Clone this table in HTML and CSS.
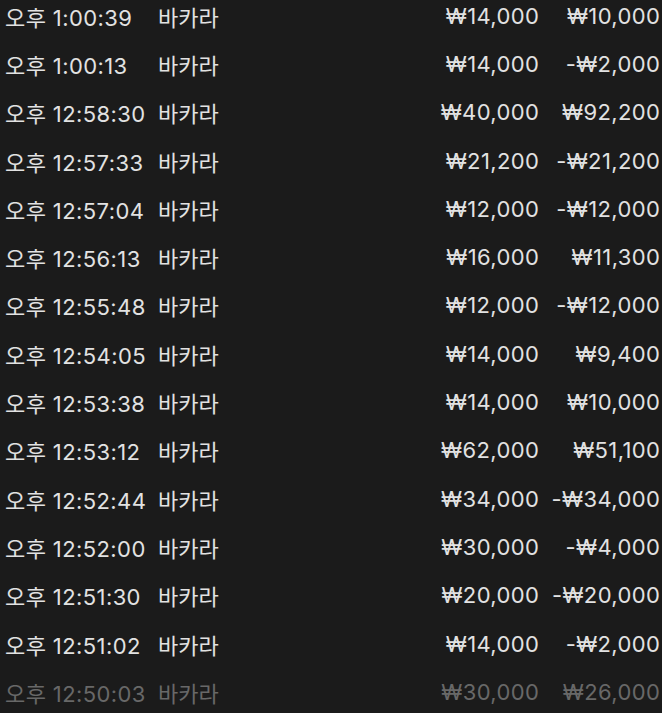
FILE: index.html
```html
<!DOCTYPE html>
<html lang="ko">
<head>
<meta charset="utf-8">
<link rel="stylesheet" href="styles.css">
</head>
<body>
<div class="list">
  <div class="row"><span class="time">오후 1:00:39</span><span class="game">바카라</span><span class="bet">₩14,000</span><span class="win">₩10,000</span></div>
  <div class="row"><span class="time">오후 1:00:13</span><span class="game">바카라</span><span class="bet">₩14,000</span><span class="win">-₩2,000</span></div>
  <div class="row"><span class="time">오후 12:58:30</span><span class="game">바카라</span><span class="bet">₩40,000</span><span class="win">₩92,200</span></div>
  <div class="row"><span class="time">오후 12:57:33</span><span class="game">바카라</span><span class="bet">₩21,200</span><span class="win">-₩21,200</span></div>
  <div class="row"><span class="time">오후 12:57:04</span><span class="game">바카라</span><span class="bet">₩12,000</span><span class="win">-₩12,000</span></div>
  <div class="row"><span class="time">오후 12:56:13</span><span class="game">바카라</span><span class="bet">₩16,000</span><span class="win">₩11,300</span></div>
  <div class="row"><span class="time">오후 12:55:48</span><span class="game">바카라</span><span class="bet">₩12,000</span><span class="win">-₩12,000</span></div>
  <div class="row"><span class="time">오후 12:54:05</span><span class="game">바카라</span><span class="bet">₩14,000</span><span class="win">₩9,400</span></div>
  <div class="row"><span class="time">오후 12:53:38</span><span class="game">바카라</span><span class="bet">₩14,000</span><span class="win">₩10,000</span></div>
  <div class="row"><span class="time">오후 12:53:12</span><span class="game">바카라</span><span class="bet">₩62,000</span><span class="win">₩51,100</span></div>
  <div class="row"><span class="time">오후 12:52:44</span><span class="game">바카라</span><span class="bet">₩34,000</span><span class="win">-₩34,000</span></div>
  <div class="row"><span class="time">오후 12:52:00</span><span class="game">바카라</span><span class="bet">₩30,000</span><span class="win">-₩4,000</span></div>
  <div class="row"><span class="time">오후 12:51:30</span><span class="game">바카라</span><span class="bet">₩20,000</span><span class="win">-₩20,000</span></div>
  <div class="row"><span class="time">오후 12:51:02</span><span class="game">바카라</span><span class="bet">₩14,000</span><span class="win">-₩2,000</span></div>
  <div class="row faded"><span class="time">오후 12:50:03</span><span class="game">바카라</span><span class="bet">₩30,000</span><span class="win">₩26,000</span></div>
</div>
</body>
</html>
```

FILE: styles.css
```css
html, body {
  margin: 0;
  padding: 0;
  background: #1b1b1b;
  height: 100%;
  overflow: hidden;
}
body {
  font-family: Inter, "Noto Sans CJK KR", sans-serif;
  font-size: 22px;
  color: #e2e2e2;
}
.list {
  margin-top: -8.5px;
  padding: 0 2px 0 5px;
}
.row {
  display: grid;
  grid-template-columns: 153px 1fr 120px 121px;
  align-items: center;
  height: 48.3px;
  white-space: nowrap;
  letter-spacing: 0.4px;
}
.game {
  letter-spacing: 0;
}
.bet, .win {
  text-align: right;
  margin-right: -0.4px;
}
.faded {
  color: #686868;
}
```
